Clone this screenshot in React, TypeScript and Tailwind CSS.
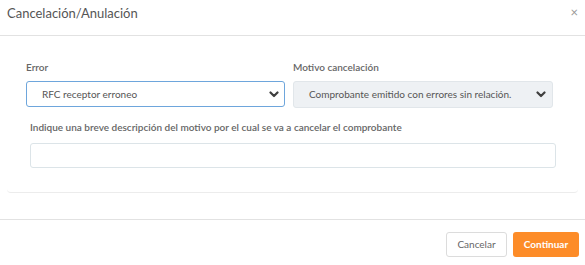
import React from 'react';

const Chevron: React.FC = () => (
  <svg className="h-[7px] w-[10px]" viewBox="0 0 10 7" fill="none">
    <polyline points="1.5,1.5 5,5 8.5,1.5" stroke="#3f3f3f" strokeWidth="2.2" strokeLinecap="round" strokeLinejoin="round" />
  </svg>
);

const App: React.FC = () => {
  return (
    <main className="flex h-[265px] w-[585px] flex-col bg-white font-['Lato',sans-serif] text-[#555]">
      <header className="flex h-[36px] items-start justify-between border-b border-[#e2e2e2] pl-[7px] pr-[7px] pt-[3px]">
        <h1 className="text-[13px] leading-[20px] text-[#555]">Cancelación/Anulación</h1>
        <button className="mt-[3px] text-[13px] leading-none text-[#999]">×</button>
      </header>

      <section className="px-[7px] pt-[15px]">
        <div className="h-[142px] rounded-b-[4px] border-b border-[#ececec] pl-[19px] pr-[24px] pt-[9px]">
          <div className="flex gap-[8px]">
            <div className="flex w-[259px] flex-col gap-[6px]">
              <label className="text-[10px] font-semibold text-[#666]">Error</label>
              <div className="flex h-[26px] items-center justify-between rounded-[3px] border border-[#6ea6dc] pl-[15px] pr-[5px]">
                <span className="text-[10px] text-[#555]">RFC receptor erroneo</span>
                <Chevron />
              </div>
            </div>
            <div className="flex w-[260px] flex-col gap-[6px]">
              <label className="text-[10px] font-semibold text-[#666]">Motivo cancelación</label>
              <div className="flex h-[27px] items-center justify-between rounded-[3px] border border-[#e1e6ea] bg-[#eef1f4] pl-[15px] pr-[6px]">
                <span className="text-[10px] text-[#555]">Comprobante emitido con errores sin relación.</span>
                <Chevron />
              </div>
            </div>
          </div>

          <div className="mt-[12px] flex flex-col gap-[8px] pl-[4px]">
            <label className="text-[10px] font-semibold text-[#666]">
              Indique una breve descripción del motivo por el cual se va a cancelar el comprobante
            </label>
            <input className="h-[25px] w-[526px] rounded-[3px] border border-[#dce4e8] px-2 text-[11px] outline-none" />
          </div>
        </div>
      </section>

      <footer className="mt-[26px] flex flex-1 items-start justify-end gap-[6px] border-t border-[#e2e2e2] pr-[6px] pt-[12px]">
        <button className="h-[25px] w-[61px] rounded-[3px] border border-[#dcdcdc] bg-white text-[10px] text-[#666]">
          Cancelar
        </button>
        <button className="h-[25px] w-[66px] rounded-[3px] bg-[#fd8c28] text-[10px] font-bold text-white">
          Continuar
        </button>
      </footer>
    </main>
  );
};

export default App;
